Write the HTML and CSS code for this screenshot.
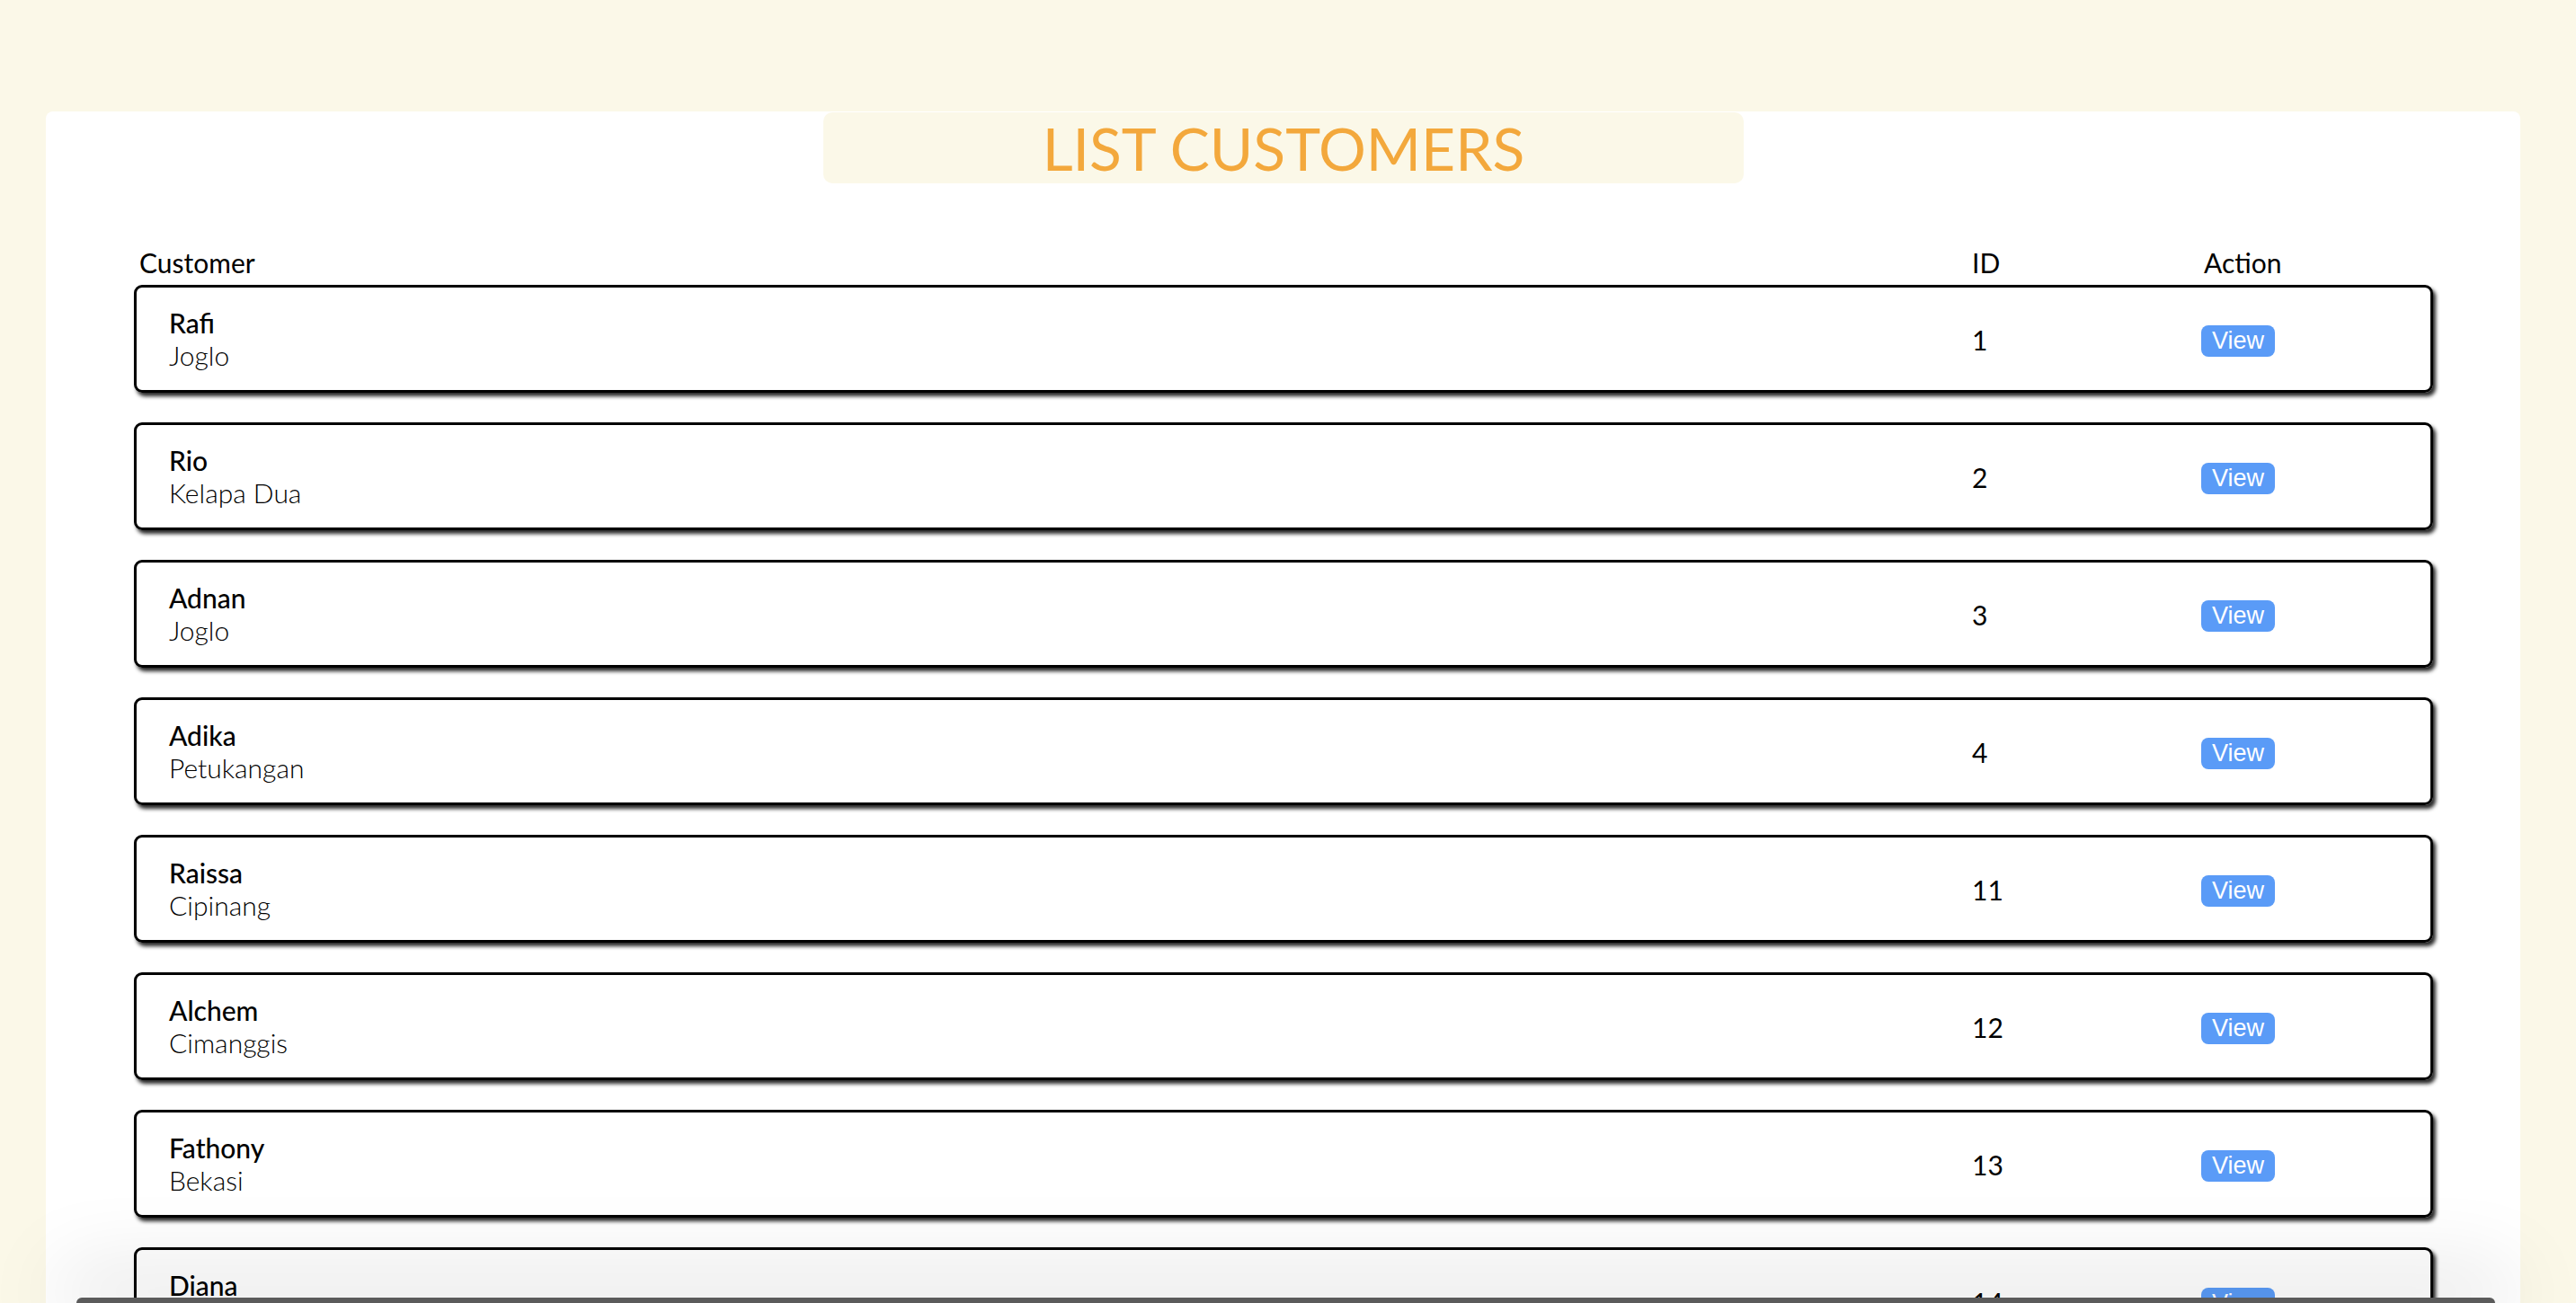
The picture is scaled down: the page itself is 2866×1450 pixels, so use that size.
FILE: index.html
```html
<!DOCTYPE html>
<html lang="id">
<head>
<meta charset="utf-8">
<title>List Customers</title>
<link rel="stylesheet" href="styles.css">
</head>
<body>
<div class="page">
  <main class="panel">
    <h1 class="title">LIST CUSTOMERS</h1>
    <div class="table-head">
      <div>Customer</div>
      <div>ID</div>
      <div>Action</div>
    </div>
    <div class="rows">
      <div class="row">
        <div class="cust"><div class="name">Rafi</div><div class="loc">Joglo</div></div>
        <div class="id">1</div>
        <div class="act"><button class="view">View</button></div>
      </div>
      <div class="row">
        <div class="cust"><div class="name">Rio</div><div class="loc">Kelapa Dua</div></div>
        <div class="id">2</div>
        <div class="act"><button class="view">View</button></div>
      </div>
      <div class="row">
        <div class="cust"><div class="name">Adnan</div><div class="loc">Joglo</div></div>
        <div class="id">3</div>
        <div class="act"><button class="view">View</button></div>
      </div>
      <div class="row">
        <div class="cust"><div class="name">Adika</div><div class="loc">Petukangan</div></div>
        <div class="id">4</div>
        <div class="act"><button class="view">View</button></div>
      </div>
      <div class="row">
        <div class="cust"><div class="name">Raissa</div><div class="loc">Cipinang</div></div>
        <div class="id">11</div>
        <div class="act"><button class="view">View</button></div>
      </div>
      <div class="row">
        <div class="cust"><div class="name">Alchem</div><div class="loc">Cimanggis</div></div>
        <div class="id">12</div>
        <div class="act"><button class="view">View</button></div>
      </div>
      <div class="row">
        <div class="cust"><div class="name">Fathony</div><div class="loc">Bekasi</div></div>
        <div class="id">13</div>
        <div class="act"><button class="view">View</button></div>
      </div>
      <div class="row">
        <div class="cust"><div class="name">Diana</div><div class="loc">&nbsp;</div></div>
        <div class="id">14</div>
        <div class="act"><button class="view">View</button></div>
      </div>
    </div>
  </main>
</div>
<div class="bottom-bar"></div>
</body>
</html>
```
FILE: styles.css
```css
html, body {
  margin: 0;
  padding: 0;
  background: #fbf8e8;
  font-family: Lato, "Open Sans", sans-serif;
  color: #000;
}

.page {
  padding: 124px 62px 0 51px;
}

.panel {
  background: #ffffff;
  border-radius: 8px 8px 0 0;
  padding: 1px 97px 60px 98px;
  min-height: 1400px;
}

.title {
  width: 1024px;
  height: 79px;
  margin: 0 auto;
  background: #fbf8e8;
  border-radius: 10px;
  display: flex;
  align-items: center;
  justify-content: center;
  font-weight: 400;
  font-size: 66px;
  color: #f3a83c;
  line-height: 1;
}

.table-head {
  margin-top: 70px;
  display: grid;
  grid-template-columns: 1fr 258px 255px;
  padding-left: 6px;
  font-size: 30px;
  line-height: 36px;
}

.rows {
  margin-top: 7px;
  display: flex;
  flex-direction: column;
  gap: 33px;
}

.row {
  display: grid;
  grid-template-columns: 1fr 255px 255px;
  align-items: center;
  border: 3px solid #000;
  border-radius: 9px;
  padding: 21px 0 21px 36px;
  box-shadow: 3px 4px 4px rgba(0, 0, 0, 0.85);
  font-size: 30px;
  line-height: 36px;
}

.name {
  font-weight: 500;
}

.loc {
  font-weight: 300;
  color: #000;
}

.id {
  font-weight: 400;
  padding-top: 1px;
}

.view {
  width: 82px;
  height: 35px;
  padding: 0;
  border: none;
  border-radius: 8px;
  background: #5a9bf7;
  color: #ffffff;
  font-family: "Liberation Sans", Arial, sans-serif;
  font-size: 27px;
  line-height: 35px;
  text-align: center;
  margin-top: 3px;
}

.bottom-bar {
  position: fixed;
  left: 85px;
  right: 90px;
  bottom: 0;
  height: 6px;
  background: #5b5b5b;
  border-radius: 14px 14px 0 0;
  box-shadow: 0 -10px 90px 20px rgba(0, 0, 0, 0.13);
}
```
